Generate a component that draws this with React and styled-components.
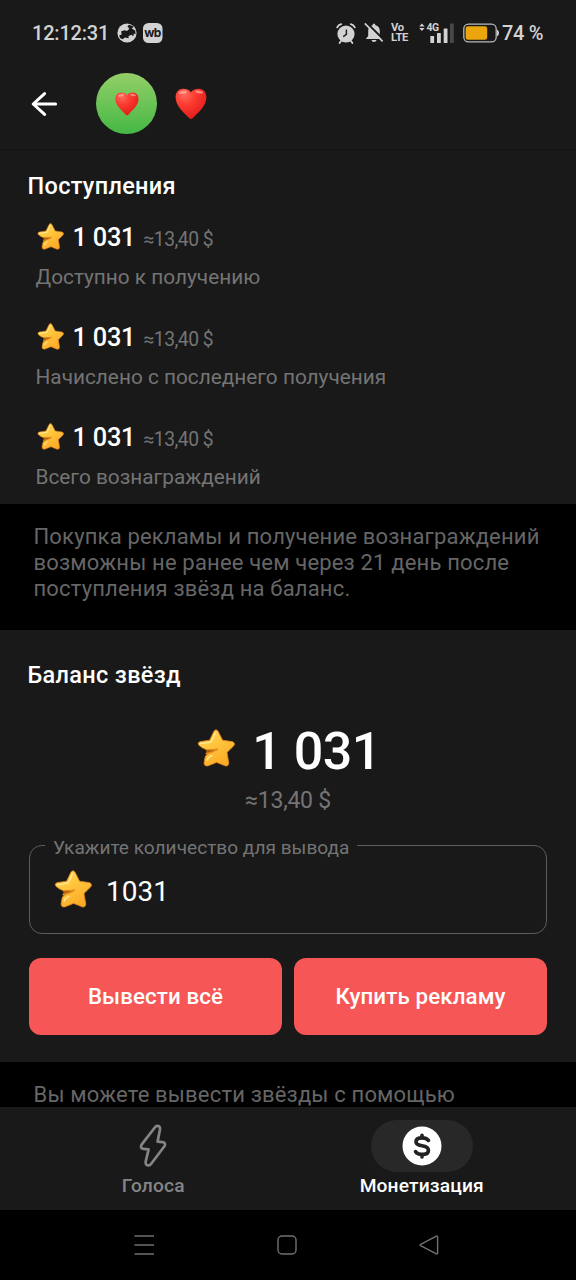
import React from 'react';
import styled, { createGlobalStyle } from 'styled-components';

const GlobalStyle = createGlobalStyle`
  * {
    box-sizing: border-box;
  }
  body {
    margin: 0;
    background: #000;
    font-family: Roboto, sans-serif;
    color: #fff;
  }
`

const Screen = styled.div`
  width: 576px;
  height: 1280px;
  display: flex;
  flex-direction: column;
  overflow: hidden;
  background: #000;
`

const StatusBar = styled.div`
  height: 66px;
  flex: none;
  display: flex;
  justify-content: space-between;
  align-items: center;
  padding: 0 32px 0 32px;
  background: #191919;
  color: #d2d2d2;
`

const StatusGroup = styled.div`
  display: flex;
  align-items: center;
`

const AlarmGroup = styled(StatusGroup)`
  gap: 8px;
  margin-right: 7px;
`

const SignalGroup = styled(StatusGroup)`
  margin-right: 8px;
`

const Clock = styled.div`
  width: 85px;
  font-size: 20px;
  font-weight: 500;
  line-height: 24px;
  letter-spacing: -0.2px;
  white-space: nowrap;
`

const Volte = styled.div`
  width: 19px;
  margin-right: 9px;
  font-size: 11.2px;
  font-weight: 700;
  line-height: 10.3px;
  letter-spacing: -0.4px;
`

const BatteryLabel = styled.div`
  width: 42px;
  margin-left: 3px;
  font-size: 20px;
  font-weight: 500;
  line-height: 24px;
  letter-spacing: -0.3px;
  white-space: nowrap;
`

const Header = styled.div`
  height: 84px;
  flex: none;
  display: flex;
  align-items: center;
  padding: 0 30px 8px;
  background: #191919;
  border-bottom: 1px solid #131313;
`

const Avatar = styled.div`
  width: 61px;
  height: 61px;
  margin: 0 18px 0 37px;
  display: flex;
  justify-content: center;
  align-items: center;
  border-radius: 50%;
  background: linear-gradient(#93cf68, #45b845);
`

const Content = styled.div`
  flex: 1;
  min-height: 0;
  overflow: hidden;
`

const Section = styled.div`
  height: ${props => props.$height}px;
  padding: ${props => props.$top}px 29px 0;
  background: #191919;
`

const SectionTitle = styled.div`
  margin-left: -1.5px;
  font-size: 23.5px;
  font-weight: 500;
  line-height: 28px;
  letter-spacing: 0.32px;
  white-space: nowrap;
`

const IncomeList = styled.div`
  padding-top: 12px;
`

const Income = styled.div`
  height: 100px;
  padding: 9px 0 0 7px;
`

const IncomeLine = styled.div`
  display: flex;
  align-items: center;
  height: 32px;
  padding-left: 1px;
  white-space: nowrap;
  svg {
    margin-bottom: 2px;
  }
`

const Amount = styled.div`
  width: 71px;
  margin-left: 8.5px;
  font-size: 25.4px;
  font-weight: 500;
  line-height: 32px;
  letter-spacing: -0.25px;
`

const Approx = styled.div`
  padding-top: 5px;
  font-size: 19.3px;
  line-height: 27px;
  letter-spacing: -0.5px;
  color: #747474;
`

const IncomeLabel = styled.div`
  margin: 10px 0 0 -0.5px;
  font-size: 20.8px;
  line-height: 28px;
  color: #747474;
  white-space: nowrap;
`

const Note = styled.div`
  height: ${props => props.$height}px;
  padding: 20px 33.5px 0;
  background: #000;
  font-size: 22px;
  line-height: 26px;
  letter-spacing: 0.17px;
  color: #666;
  white-space: nowrap;
`

const Balance = styled.div`
  display: flex;
  justify-content: center;
  align-items: center;
  height: 64px;
  margin-top: 31px;
  padding-left: 2px;
  svg {
    margin-bottom: 8px;
  }
`

const BalanceValue = styled.div`
  margin-left: 17px;
  font-size: 52px;
  font-weight: 500;
  line-height: 64px;
  letter-spacing: -0.5px;
`

const BalanceApprox = styled.div`
  margin-top: 3px;
  font-size: 23px;
  line-height: 28px;
  letter-spacing: -0.25px;
  text-align: center;
  color: #747474;
`

const Field = styled.fieldset`
  height: 97px;
  min-width: 0;
  margin: 22px 0 0;
  padding: 0 0 0 24px;
  border: 1px solid #5c5c5c;
  border-radius: 13px;
`

const FieldLegend = styled.legend`
  height: 16px;
  margin-left: -9px;
  padding: 0 8px;
  font-size: 19.1px;
  line-height: 22px;
  color: #747474;
  white-space: nowrap;
`

const FieldBody = styled.div`
  display: flex;
  align-items: center;
  height: 48px;
  margin-top: 14.5px;
  svg {
    margin-bottom: 5px;
  }
`

const FieldValue = styled.div`
  margin-left: 14px;
  font-size: 28px;
  line-height: 40px;
`

const Buttons = styled.div`
  display: grid;
  grid-template-columns: 1fr 1fr;
  gap: 12px;
  margin-top: 24px;
`

const Button = styled.button`
  height: 77px;
  padding: 0 0 2px;
  border: 0;
  border-radius: 12px;
  background: #f65656;
  color: #fff;
  font-family: inherit;
  font-size: 22.3px;
  font-weight: 500;
  letter-spacing: 0.12px;
`

const Tabs = styled.div`
  height: 103px;
  flex: none;
  display: flex;
  padding: 13px 20px 0 19px;
  background: #191919;
`

const Tab = styled.div`
  flex: 1;
  display: flex;
  flex-direction: column;
  align-items: center;
  color: ${props => props.$active ? '#fff' : '#858585'};
  font-size: 19.2px;
  font-weight: 500;
  line-height: 24px;
  letter-spacing: 0.15px;
`

const TabIcon = styled.div`
  width: 102px;
  height: 52px;
  margin-bottom: 2px;
  display: flex;
  justify-content: center;
  align-items: center;
  border-radius: 26px;
  background: ${props => props.$active ? '#282828' : 'transparent'};
`

const SystemNav = styled.div`
  height: 70px;
  flex: none;
  display: flex;
  align-items: center;
  justify-content: space-between;
  padding: 0 137px 0 134px;
  background: #000;
`

const Star = ({ size }) => (
  <svg width={size} height={size} viewBox="0 0 38 38">
    <defs>
      <linearGradient id="starFill" x1="0" y1="0" x2="0.6" y2="1">
        <stop offset="0" stopColor="#ffdc62" />
        <stop offset="0.5" stopColor="#ffc53c" />
        <stop offset="1" stopColor="#fcaa28" />
      </linearGradient>
    </defs>
    <path
      d="M16.8 2.4Q19 -0.8 21.2 2.4L25.6 11.2L35.2 12.6Q39 14 36.6 17L30 23.4L31.8 34Q31.4 37.8 28 36.8L19.6 33.4L10.8 36.9Q6.8 37.4 7.1 33.6L8.1 28Q9 25.2 12 24.2Q17 22.6 20.6 20.2Q14 21 9 20.5Q6.2 19.8 2.4 16.8Q-0.4 13.8 3.4 12.6L12.6 11.2Z"
      fill="url(#starFill)" stroke="#d9801a" strokeWidth="0.8" strokeLinejoin="round"
    />
    <path d="M9 24.6Q15.6 23.6 20.6 20.2Q14 21 9.4 20.6" fill="#a8600f" stroke="#e88d1c" strokeWidth="1.2" strokeLinecap="round" strokeLinejoin="round" />
    <path d="M3.6 14.6L14.2 13L18.4 4M10.2 31Q11 28 14.8 26.6" fill="none" stroke="#ffeb9a" strokeWidth="1.4" strokeLinecap="round" strokeLinejoin="round" />
  </svg>
)

const Heart = ({ size }) => (
  <svg width={size} height={size} viewBox="0 0 32 32">
    <defs>
      <radialGradient id="heartFill" cx="0.3" cy="0.2" r="0.85">
        <stop offset="0" stopColor="#ff6a5c" />
        <stop offset="0.4" stopColor="#fb3b30" />
        <stop offset="1" stopColor="#e01b1b" />
      </radialGradient>
    </defs>
    <path
      d="M16 4.2C18 1.6 21 0.7 24.2 0.8C28.8 1.2 31.6 4.8 31.4 9.8C31 18 24.4 23.6 18 29.9Q16 32.2 14 29.9C7.6 23.6 1 18 0.6 9.8C0.4 4.8 3.2 1.2 7.8 0.8C11 0.7 14 1.6 16 4.2Z"
      fill="url(#heartFill)"
    />
    <ellipse cx="8" cy="4.4" rx="4.2" ry="1.6" fill="#ffc0b4" opacity="0.6" transform="rotate(-12 8 4.4)" />
    <ellipse cx="24" cy="4" rx="4" ry="1.4" fill="#ffc0b4" opacity="0.6" transform="rotate(10 24 4)" />
  </svg>
)

const StatusIcons = () => (
  <svg width="46" height="22" viewBox="0 0 46 22" fill="#d2d2d2">
    <circle cx="10" cy="11" r="9.6" />
    <path d="M2.2 13.6L4.6 12.6L4.2 9.2L7.6 8.2L10 9L12.4 6.8L10.4 4.4L12 2.8L16.8 4.4L14.8 6.4L18.2 8.4L18.6 12.2L16.8 11.6L16.4 14.2L14.2 12.8L11.4 14.2L11.8 16.2L8 15.4L5.6 17.2L3 16Z" fill="#191919" />
    <rect x="26" y="1" width="19.5" height="20" rx="5.5" />
    <text x="35.5" y="14.6" textAnchor="middle" fontSize="12" fontWeight="700" fontFamily="Inter, sans-serif" letterSpacing="-0.6" fill="#191919">wb</text>
  </svg>
)

const AlarmIcon = () => (
  <svg width="20" height="21" viewBox="0 0 20 21">
    <circle cx="10" cy="11" r="8.6" fill="#d2d2d2" />
    <path d="M1.2 4.4Q2.4 2 5.2 1.2M18.8 4.4Q17.6 2 14.8 1.2M5 18L3.6 20M15 18L16.4 20" fill="none" stroke="#d2d2d2" strokeWidth="1.8" strokeLinecap="round" />
    <path d="M10.4 6.4V11.4L7.2 13.6" fill="none" stroke="#191919" strokeWidth="1.4" />
  </svg>
)

const BellOffIcon = () => (
  <svg width="20" height="20" viewBox="0 0 20 20">
    <path d="M10 0.6Q11.4 0.6 11.4 2.2Q15.8 3.4 15.8 8V13L18.2 16H1.8L4.2 13V8Q4.2 3.4 8.6 2.2Q8.6 0.6 10 0.6ZM7.4 17H12.6Q12 19 10 19Q8 19 7.4 17Z" fill="#d2d2d2" />
    <path d="M2 -0.8L20 17" stroke="#191919" strokeWidth="2" />
    <path d="M0.8 0.4L18.6 18.4" stroke="#d2d2d2" strokeWidth="1.7" />
  </svg>
)

const SignalIcon = () => (
  <svg width="36" height="22" viewBox="0 0 36 22" fill="#d2d2d2">
    <path d="M0.2 4.4L2.9 1.4L5.6 4.4ZM0.2 6L2.9 9L5.6 6Z" />
    <text x="7.6" y="9.4" fontSize="10.4" fontWeight="700" fontFamily="Roboto, sans-serif" letterSpacing="-0.6">4G</text>
    <rect x="11.3" y="14" width="3.8" height="7" rx="0.5" />
    <rect x="18" y="11" width="3.8" height="10" rx="0.5" />
    <rect x="24.7" y="6.5" width="3.8" height="14.5" rx="0.5" />
    <rect x="31" y="1.5" width="3.8" height="19.5" rx="0.5" fill="#484848" />
  </svg>
)

const BatteryIcon = () => (
  <svg width="36" height="20" viewBox="0 0 36 20">
    <rect x="0.8" y="1.2" width="32.4" height="17.6" rx="4.6" fill="none" stroke="#b9b9b9" strokeWidth="1.3" />
    <path d="M34 6.5Q36 7.5 36 10Q36 12.5 34 13.5Z" fill="#d2d2d2" />
    <rect x="2.6" y="3.2" width="21.6" height="13.6" rx="2.4" fill="#eba50d" />
  </svg>
)

const BackIcon = () => (
  <svg width="29" height="26" viewBox="0 0 29 26" fill="none" stroke="#fff" strokeWidth="3" strokeLinecap="round" strokeLinejoin="round">
    <path d="M25.6 13H3.2M14.6 2.6L3.2 13L14.6 23.4" />
  </svg>
)

const BoltIcon = () => (
  <svg width="28" height="44" viewBox="0 0 28 44" fill="none" stroke="#858585" strokeWidth="2.7" strokeLinejoin="round">
    <path d="M16.2 3L2.6 20.6Q0.6 24.4 4.4 24.8L9.6 25.4L6.6 38Q6.6 41.6 9.6 41.4Q11 41.4 12 40L25.4 22.2Q27.4 18.8 23.6 18.2L18.6 17.6L21 5.4Q21.2 1.8 18.2 1.8Q17 1.8 16.2 3Z" />
  </svg>
)

const DollarIcon = () => (
  <svg width="40" height="40" viewBox="0 0 40 40">
    <circle cx="20" cy="20" r="19.5" fill="#fff" />
    <path d="M26.4 14.4Q24.6 11.8 20 11.8Q14 11.8 14 15.8Q14 18.8 20 19.8Q26.4 20.8 26.4 24.4Q26.4 28.4 20 28.4Q15.2 28.4 13.6 25.6M20 9.4V12M20 28.4V30.8" fill="none" stroke="#222" strokeWidth="3.7" strokeLinecap="round" />
  </svg>
)

const incomes = [
  'Доступно к получению',
  'Начислено с последнего получения',
  'Всего вознаграждений',
]

export default function App () {
  return (
    <Screen>
      <GlobalStyle/>
      <StatusBar>
        <StatusGroup>
          <Clock>12:12:31</Clock>
          <StatusIcons/>
        </StatusGroup>
        <StatusGroup>
          <AlarmGroup>
            <AlarmIcon/>
            <BellOffIcon/>
          </AlarmGroup>
          <Volte>Vo<br/>LTE</Volte>
          <SignalGroup>
            <SignalIcon/>
          </SignalGroup>
          <BatteryIcon/>
          <BatteryLabel>74 %</BatteryLabel>
        </StatusGroup>
      </StatusBar>
      <Header>
        <BackIcon/>
        <Avatar><Heart size={24}/></Avatar>
        <Heart size={32}/>
      </Header>
      <Content>
        <Section $height={354} $top={22}>
          <SectionTitle>Поступления</SectionTitle>
          <IncomeList>
            {incomes.map(label => (
              <Income key={label}>
                <IncomeLine>
                  <Star size={27}/>
                  <Amount>1 031</Amount>
                  <Approx>≈13,40 $</Approx>
                </IncomeLine>
                <IncomeLabel>{label}</IncomeLabel>
              </Income>
            ))}
          </IncomeList>
        </Section>
        <Note $height={126}>
          Покупка рекламы и получение вознаграждений<br/>
          возможны не ранее чем через 21 день после<br/>
          поступления звёзд на баланс.
        </Note>
        <Section $height={432} $top={31}>
          <SectionTitle>Баланс звёзд</SectionTitle>
          <Balance>
            <Star size={38}/>
            <BalanceValue>1 031</BalanceValue>
          </Balance>
          <BalanceApprox>≈13,40 $</BalanceApprox>
          <Field>
            <FieldLegend>Укажите количество для вывода</FieldLegend>
            <FieldBody>
              <Star size={38}/>
              <FieldValue>1031</FieldValue>
            </FieldBody>
          </Field>
          <Buttons>
            <Button>Вывести всё</Button>
            <Button>Купить рекламу</Button>
          </Buttons>
        </Section>
        <Note $height={60}>Вы можете вывести звёзды с помощью</Note>
      </Content>
      <Tabs>
        <Tab>
          <TabIcon><BoltIcon/></TabIcon>
          Голоса
        </Tab>
        <Tab $active>
          <TabIcon $active><DollarIcon/></TabIcon>
          Монетизация
        </Tab>
      </Tabs>
      <SystemNav>
        <svg width="21" height="20" viewBox="0 0 21 20" stroke="#707070" strokeWidth="1.4">
          <path d="M0.5 1H20M0.5 10H20M0.5 19H20" />
        </svg>
        <svg width="20" height="20" viewBox="0 0 20 20" fill="none" stroke="#707070" strokeWidth="1.4">
          <rect x="1" y="1" width="18" height="18" rx="4" />
        </svg>
        <svg width="20" height="20" viewBox="0 0 20 20" fill="none" stroke="#707070" strokeWidth="1.4" strokeLinejoin="round">
          <path d="M1.6 9.4Q0.6 10 1.6 10.6L17.4 18.8Q18.6 19.2 18.6 18V2Q18.6 0.8 17.4 1.2Z" />
        </svg>
      </SystemNav>
    </Screen>
  )
}
